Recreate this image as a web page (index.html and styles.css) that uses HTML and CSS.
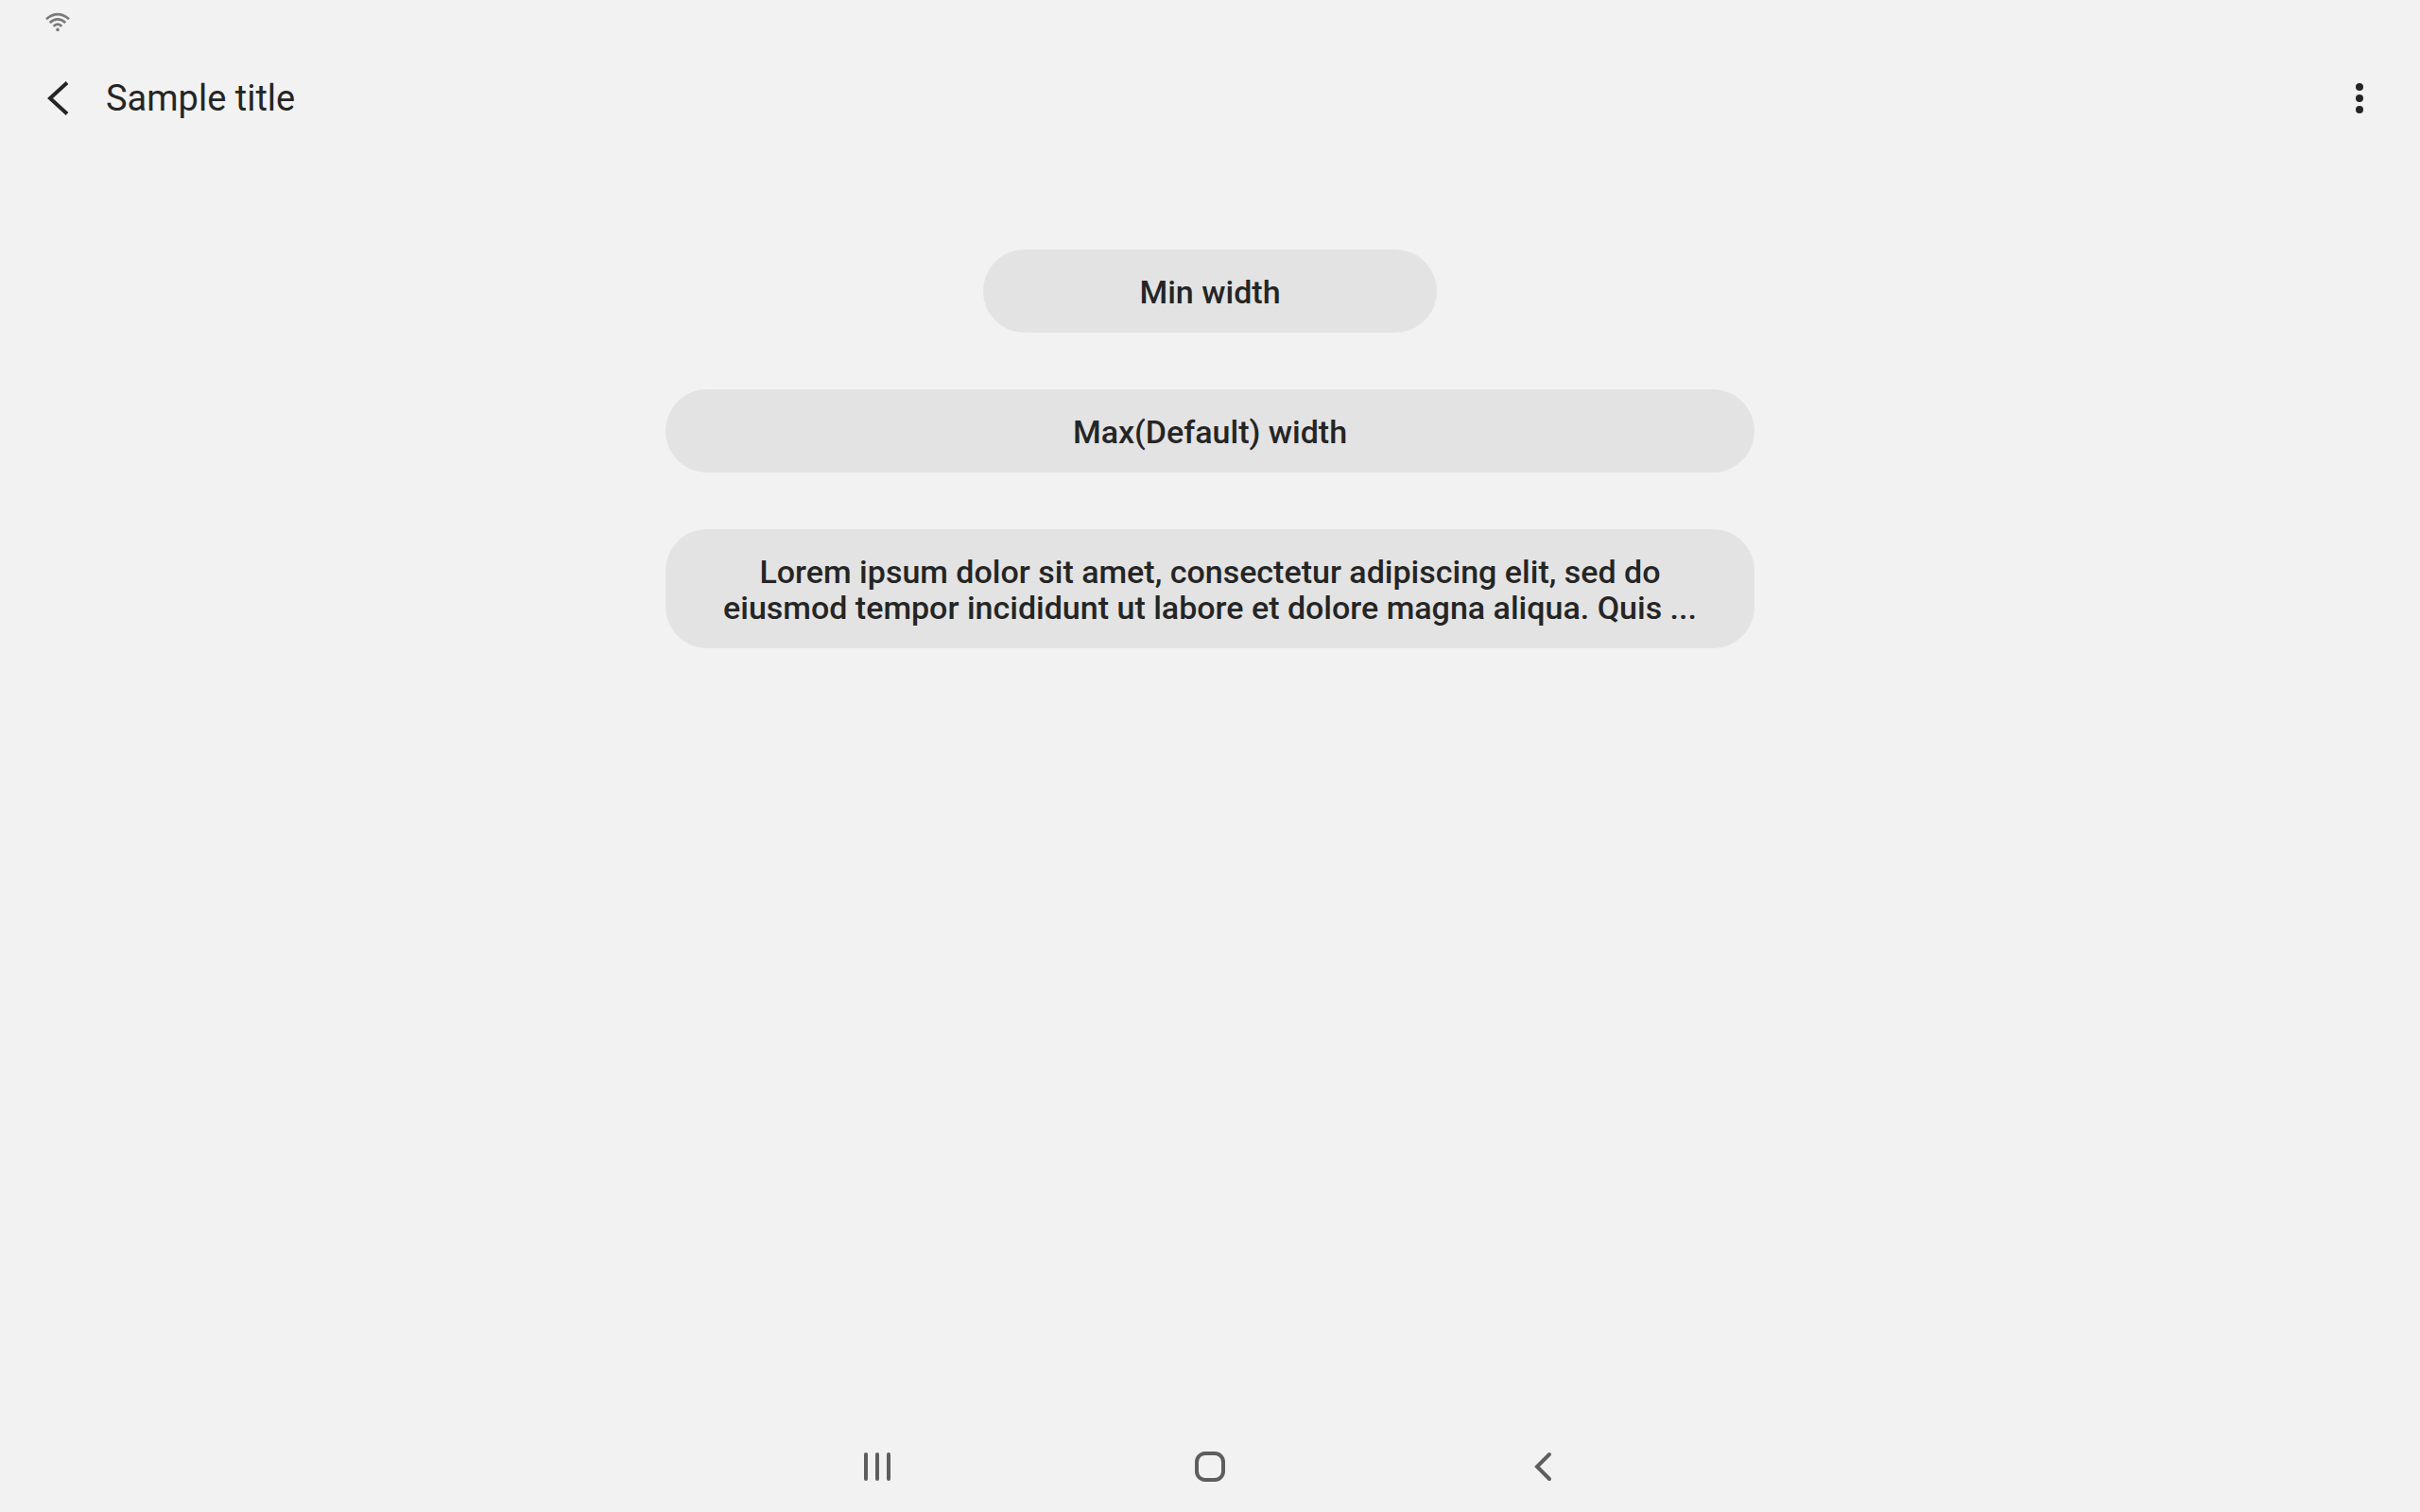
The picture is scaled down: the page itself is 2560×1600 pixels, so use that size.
FILE: index.html
```html
<!DOCTYPE html>
<html lang="en">
<head>
<meta charset="utf-8">
<title>Sample title</title>
<link rel="stylesheet" href="styles.css">
</head>
<body>
<div class="status-bar">
  <svg width="26" height="24" viewBox="0 0 26 24" fill="none" stroke="#7a7a7a" stroke-width="2.600"><path d="M1 8.200Q13 -1.800 25 8.200M4.700 12Q13 4.600 21.300 12M8.600 15.800Q13 11.600 17.400 15.800"/><circle cx="13" cy="19.400" r="1.800" fill="#7a7a7a" stroke="none"/></svg>
</div>
<header class="app-bar">
  <button class="icon-button" aria-label="Navigate up"><svg width="32" height="40" viewBox="0 0 32 40" fill="none" stroke="#252525" stroke-width="4"><path d="M23 3.500L5 20L23 36.500"/></svg></button>
  <h1 class="title">Sample title</h1>
  <button class="icon-button" aria-label="More options"><svg width="10" height="34" viewBox="0 0 10 34" fill="#252525"><circle cx="5" cy="5" r="4"/><circle cx="5" cy="17" r="4"/><circle cx="5" cy="29" r="4"/></svg></button>
</header>
<main class="content">
  <button class="pill pill-min">Min width</button>
  <button class="pill">Max(Default) width</button>
  <button class="pill">Lorem ipsum dolor sit amet, consectetur adipiscing elit, sed do<br>eiusmod tempor incididunt ut labore et dolore magna aliqua. Quis ...</button>
</main>
<nav class="nav-bar" aria-label="System navigation">
  <button class="nav-button" aria-label="Recent apps"><svg width="40" height="40" viewBox="0 0 40 40" fill="none" stroke="#5e5e5e" stroke-width="4" stroke-linecap="round"><path d="M8 7V33M20 7V33M32 7V33"/></svg></button>
  <button class="nav-button" aria-label="Home"><svg width="40" height="40" viewBox="0 0 40 40" fill="none" stroke="#5e5e5e" stroke-width="4"><rect x="6" y="6" width="28" height="28" rx="9"/></svg></button>
  <button class="nav-button" aria-label="Back"><svg width="40" height="40" viewBox="0 0 40 40" fill="none" stroke="#5e5e5e" stroke-width="4" stroke-linecap="round"><path d="M27 7L14 20L27 33"/></svg></button>
</nav>
</body>
</html>
```
FILE: styles.css
```css
* { box-sizing: border-box; }
body {
  margin: 0;
  min-height: 100vh;
  display: flex;
  flex-direction: column;
  background: #f2f2f2;
  color: #252525;
  font-family: Roboto, sans-serif;
}
button {
  border: 0;
  padding: 0;
  background: none;
  color: inherit;
  font: inherit;
}
svg { display: block; }
.status-bar {
  height: 48px;
  padding: 12px 48px;
}
.app-bar {
  display: flex;
  align-items: center;
  height: 112px;
  padding: 0 24px;
}
.icon-button {
  display: flex;
  align-items: center;
  justify-content: center;
  width: 80px;
  height: 80px;
}
.title {
  flex: 1;
  margin: 0 0 0 8px;
  font-size: 38px;
  font-weight: 400;
}
.content {
  flex: 1;
  display: flex;
  flex-direction: column;
  align-items: center;
  gap: 60px;
  padding-top: 104px;
}
.pill {
  width: 45%;
  padding: 26px 48px 24px;
  border-radius: 44px;
  background: #e3e3e3;
  font-size: 34px;
  font-weight: 500;
  line-height: 38px;
  text-align: center;
}
.pill-min { width: 480px; }
.nav-bar {
  display: flex;
  justify-content: center;
  gap: 272px;
  height: 96px;
}
.nav-button {
  display: flex;
  align-items: center;
  justify-content: center;
  width: 80px;
}
```
